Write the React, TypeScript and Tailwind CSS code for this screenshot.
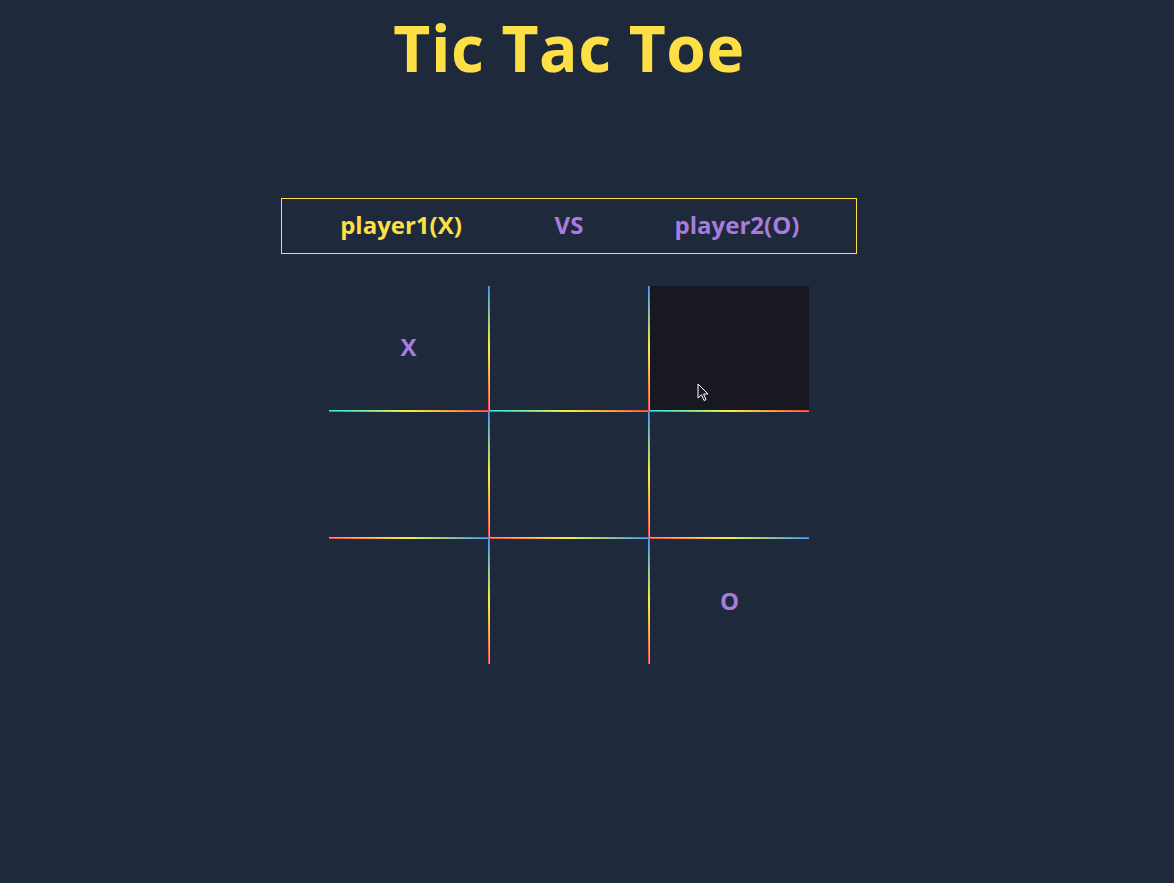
import React from "react";

type Mark = "X" | "O" | "";

const board: Mark[] = ["X", "", "", "", "", "", "", "", "O"];

const stripClass = {
  top: "h-px w-full shrink-0 bg-[linear-gradient(to_right,#f0413a,#f2f23a,#4a9ff5)]",
  bottom: "h-px w-full shrink-0 bg-[linear-gradient(to_right,#2ee8f0,#f2f23a,#f0413a)]",
  left: "w-px h-full shrink-0 bg-[linear-gradient(to_bottom,#f0413a,#f2f23a,#2ee8f0)]",
  right: "w-px h-full shrink-0 bg-[linear-gradient(to_bottom,#4a9ff5,#f2f23a,#f0413a)]",
};

const Cursor = () => (
  <svg
    className="absolute left-[48px] top-[97px]"
    width="13"
    height="20"
    viewBox="0 0 13 20"
  >
    <path
      d="M1 1 L1 15 L4.5 11.8 L7 17.5 L9 16.6 L6.6 11 L11 11 Z"
      fill="#1a1b25"
      stroke="#ffffff"
      strokeWidth="1"
      strokeLinejoin="round"
    />
  </svg>
);

const Cell = ({ index, value }: { index: number; value: Mark }) => {
  const row = Math.floor(index / 3);
  const col = index % 3;
  const hovered = index === 2;
  return (
    <div
      className={
        "relative flex flex-col " + (hovered ? "bg-[#171822]" : "")
      }
    >
      {row > 0 && <div className={stripClass.top}></div>}
      <div className="flex flex-1 min-h-0">
        {col > 0 && <div className={stripClass.left}></div>}
        <div className="flex-1 flex items-center justify-center pb-[2px] text-[24px] font-bold text-[#a87cdc]">
          {value}
        </div>
        {col < 2 && <div className={stripClass.right}></div>}
      </div>
      {row < 2 && <div className={stripClass.bottom}></div>}
      {hovered && <Cursor />}
    </div>
  );
};

export default function App() {
  return (
    <div className="min-h-screen w-full bg-[#1e293b] font-['Open_Sans',sans-serif]">
      <div className="w-[1138px] flex flex-col items-center">
        <h1 className="mt-[16px] text-[64px] leading-[64px] font-bold text-[#fee046] tracking-[0.5px]">
          Tic Tac Toe
        </h1>
        <div className="mt-[118px] w-[576px] h-[56px] border border-[#fde047] flex items-center justify-center pb-[2px] text-[24px] font-bold">
          <div className="w-[168px] text-center text-[#fee046]">player1(X)</div>
          <div className="w-[168px] text-center text-[#a87cdc]">VS</div>
          <div className="w-[168px] text-center text-[#a87cdc]">player2(O)</div>
        </div>
        <div className="mt-[32px] grid grid-cols-[160px_160px_160px] grid-rows-[125px_127px_126px]">
          {board.map((v, i) => (
            <Cell key={i} index={i} value={v} />
          ))}
        </div>
      </div>
    </div>
  );
}
